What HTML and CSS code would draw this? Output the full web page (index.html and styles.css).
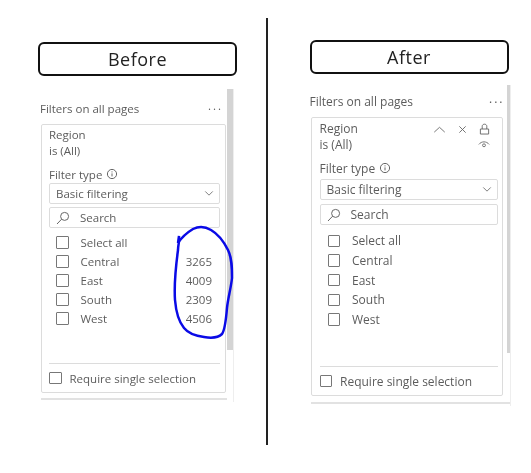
FILE: index.html
```html
<!DOCTYPE html>
<html lang="en">
<head>
    <meta charset="UTF-8">
    <title>Before and After</title>
    <link rel="stylesheet" href="styles.css">
</head>
<body>
    <div class="page">
        <section class="side before">
            <h2 class="title">Before</h2>
            <div class="panel">
                <div class="panel-main">
                    <div class="panel-head">
                        <span>Filters on all pages</span>
                        <span class="dots">...</span>
                    </div>
                    <div class="card">
                        <div class="card-head">
                            <div>
                                <div>Region</div>
                                <div>is (All)</div>
                            </div>
                        </div>
                        <div class="filter-type">
                            <span>Filter type</span>
                            <svg class="info" viewBox="0 0 12 12"><circle cx="6" cy="6" r="4.6"/><path d="M6 5.4v3M6 3.4v1"/></svg>
                        </div>
                        <div class="field select">
                            <span>Basic filtering</span>
                            <svg class="chevron" viewBox="0 0 12 8"><path d="M1.5 1.5 6 6l4.5-4.5"/></svg>
                        </div>
                        <div class="field search">
                            <svg class="search-icon" viewBox="0 0 14 14"><circle cx="8.6" cy="5.4" r="4"/><path d="M5.6 8.2 1 13"/></svg>
                            <span>Search</span>
                        </div>
                        <ul class="rows">
                            <li><i class="box"></i><span>Select all</span></li>
                            <li><i class="box"></i><span>Central</span><b>3265</b></li>
                            <li><i class="box"></i><span>East</span><b>4009</b></li>
                            <li><i class="box"></i><span>South</span><b>2309</b></li>
                            <li><i class="box"></i><span>West</span><b>4506</b></li>
                        </ul>
                        <div class="require">
                            <i class="box"></i>
                            <span>Require single selection</span>
                        </div>
                    </div>
                    <div class="next-card"></div>
                </div>
                <div class="scroll"><div class="thumb"></div></div>
            </div>
            <!-- pen circle around the numbers, viewBox is in page coordinates -->
            <svg class="ink" viewBox="170 225 66 115">
                <path d="M179 241 L179 236 L178 243 C182 237 188 232 193 229 C199 226 206 227 211 230 C218 234 224 242 228 250 C232 258 232 268 232 278 C231 288 228 298 227 308 C226 320 225 330 222 334 C218 338 210 338 204 337 C196 336 188 333 184 328 C179 322 176 312 175 300 C174 285 176 265 178 250 C178 246 179 243 179 241"/>
            </svg>
        </section>

        <div class="divider"></div>

        <section class="side after">
            <h2 class="title">After</h2>
            <div class="panel">
                <div class="panel-main">
                    <div class="panel-head">
                        <span>Filters on all pages</span>
                        <span class="dots">...</span>
                    </div>
                    <div class="card">
                        <div class="card-head">
                            <div>
                                <div>Region</div>
                                <div>is (All)</div>
                            </div>
                            <div class="card-tools">
                                <div class="tool-row">
                                    <svg class="tool-up" viewBox="0 0 14 8"><path d="M1 7 7 1.5 13 7"/></svg>
                                    <svg class="tool-x" viewBox="0 0 10 10"><path d="M1.5 1.5l7 7M8.5 1.5l-7 7"/></svg>
                                    <svg class="tool-lock" viewBox="0 0 12 13"><path d="M1.5 6.5h9v5.5h-9zM3.5 6.5V3.5C3.5 0.5 8.5 0.5 8.5 3.5V6.5"/></svg>
                                </div>
                                <svg class="tool-eye" viewBox="0 0 14 9"><path d="M1 5C4 1 10 1 13 5"/><circle cx="7" cy="6" r="1.7"/></svg>
                            </div>
                        </div>
                        <div class="filter-type">
                            <span>Filter type</span>
                            <svg class="info" viewBox="0 0 12 12"><circle cx="6" cy="6" r="4.6"/><path d="M6 5.4v3M6 3.4v1"/></svg>
                        </div>
                        <div class="field select">
                            <span>Basic filtering</span>
                            <svg class="chevron" viewBox="0 0 12 8"><path d="M1.5 1.5 6 6l4.5-4.5"/></svg>
                        </div>
                        <div class="field search">
                            <svg class="search-icon" viewBox="0 0 14 14"><circle cx="8.6" cy="5.4" r="4"/><path d="M5.6 8.2 1 13"/></svg>
                            <span>Search</span>
                        </div>
                        <ul class="rows">
                            <li><i class="box"></i><span>Select all</span></li>
                            <li><i class="box"></i><span>Central</span></li>
                            <li><i class="box"></i><span>East</span></li>
                            <li><i class="box"></i><span>South</span></li>
                            <li><i class="box"></i><span>West</span></li>
                        </ul>
                        <div class="require">
                            <i class="box"></i>
                            <span>Require single selection</span>
                        </div>
                    </div>
                    <div class="next-card"></div>
                </div>
                <div class="scroll"><div class="thumb"></div></div>
            </div>
        </section>
    </div>
</body>
</html>
```

FILE: styles.css
```css
* {
    margin: 0;
    padding: 0;
    box-sizing: border-box;
}

body {
    font-family: "Open Sans", "Noto Sans", sans-serif;
    font-size: 11.5px;
    color: #5c5c5c;
    background: #fff;
}

svg {
    fill: none;
    stroke: #666;
    stroke-width: 1;
    flex: none;
}

/* the reference is a soft, rescaled screenshot */
.page {
    width: 531px;
    height: 473px;
    display: flex;
    align-items: flex-start;
    padding: 18px 0 0 38px;
    overflow: hidden;
    filter: blur(0.35px);
}

.side {
    position: relative;
    width: 199px;
    flex: none;
}

.before {
    padding-top: 24px;
}

.after {
    width: 201px;
    margin-left: 42px;
    padding-top: 22px;
    font-size: 12px;
}

.divider {
    width: 1.5px;
    height: 427px;
    margin-left: 29px;
    background: #222;
    flex: none;
}

.title {
    width: 199px;
    height: 34px;
    border: 2px solid #111;
    border-radius: 6px;
    display: flex;
    align-items: center;
    justify-content: center;
    font-size: 18px;
    font-weight: 400;
    letter-spacing: 0.5px;
    color: #222;
}

.panel {
    display: flex;
    margin-top: 13px;
}

.after .panel {
    margin-top: 11px;
}

.panel-main {
    width: 189px;
    padding: 11px 0 0 2px;
}

.after .panel-main {
    width: 197px;
    padding-top: 8px;
    padding-left: 0;
}

.panel-head {
    height: 16px;
    display: flex;
    justify-content: space-between;
    align-items: center;
    padding-right: 4px;
    margin-bottom: 8px;
}

.after .panel-head {
    margin-bottom: 8px;
    padding-right: 2px;
}

.dots {
    letter-spacing: 2px;
    margin-top: -5px;
}

.card {
    width: 185px;
    height: 269px;
    margin-left: 1px;
    border: 1px solid #dcdcdc;
    border-radius: 2px;
    padding: 2px 5px 0 7px;
    display: flex;
    flex-direction: column;
}

.after .card {
    width: 192px;
    height: 279px;
    padding: 3px 4px 0 8px;
}

.card-head {
    display: flex;
    justify-content: space-between;
    line-height: 16px;
}

.card-tools {
    display: flex;
    flex-direction: column;
    align-items: flex-end;
    padding-right: 8px;
}

.tool-row {
    display: flex;
    align-items: center;
    gap: 12px;
    height: 16px;
}

.tool-up {
    width: 13px;
    height: 7px;
}

.tool-x {
    width: 9px;
    height: 9px;
}

.tool-lock {
    width: 11px;
    height: 12px;
}

.tool-eye {
    width: 12px;
    height: 8px;
    margin-top: 3px;
}

.filter-type {
    display: flex;
    align-items: center;
    gap: 4px;
    height: 16px;
    margin-top: 7px;
}

.info {
    width: 12px;
    height: 12px;
}

.field {
    height: 21px;
    border: 1px solid #dcdcdc;
    border-radius: 2px;
    display: flex;
    align-items: center;
    padding-left: 6px;
}

.select {
    justify-content: space-between;
    padding-right: 5px;
    margin-top: 1px;
}

.after .select {
    margin-top: 3px;
}

.chevron {
    width: 10px;
    height: 7px;
}

.search {
    gap: 10px;
    margin-top: 3px;
}

.after .search {
    margin-top: 4px;
}

.search-icon {
    width: 14px;
    height: 14px;
}

.rows {
    list-style: none;
    margin: 5px 0 0 7px;
}

.after .rows {
    margin: 6px 0 0 8px;
}

.rows li {
    height: 19px;
    display: flex;
    align-items: center;
}

.after .rows li {
    height: 19.7px;
}

.rows b {
    font-weight: 400;
    margin-left: auto;
    margin-right: 8px;
}

.box {
    width: 12.5px;
    height: 12.5px;
    border: 1px solid #777;
    border-radius: 1px;
    flex: none;
    margin-right: 12px;
}

.require {
    margin-top: auto;
    height: 29px;
    border-top: 1px solid #dcdcdc;
    display: flex;
    align-items: center;
}

.require .box {
    margin-right: 8px;
}

.next-card {
    width: 186px;
    height: 4px;
    margin: 5px 0 0 1px;
    border-top: 2px solid #e2e2e2;
}

.after .next-card {
    width: 199px;
    margin-top: 6px;
}

.scroll {
    width: 7px;
    flex: none;
    border-right: 1px solid #eee;
}

.after .scroll {
    width: 4px;
}

.thumb {
    height: 261px;
    background: #d4d4d4;
}

.after .thumb {
    height: 268px;
}

.ink {
    position: absolute;
    left: 132px;
    top: 207px;
    width: 66px;
    height: 115px;
    stroke: #0a0ae6;
    stroke-width: 2.5;
}
```
